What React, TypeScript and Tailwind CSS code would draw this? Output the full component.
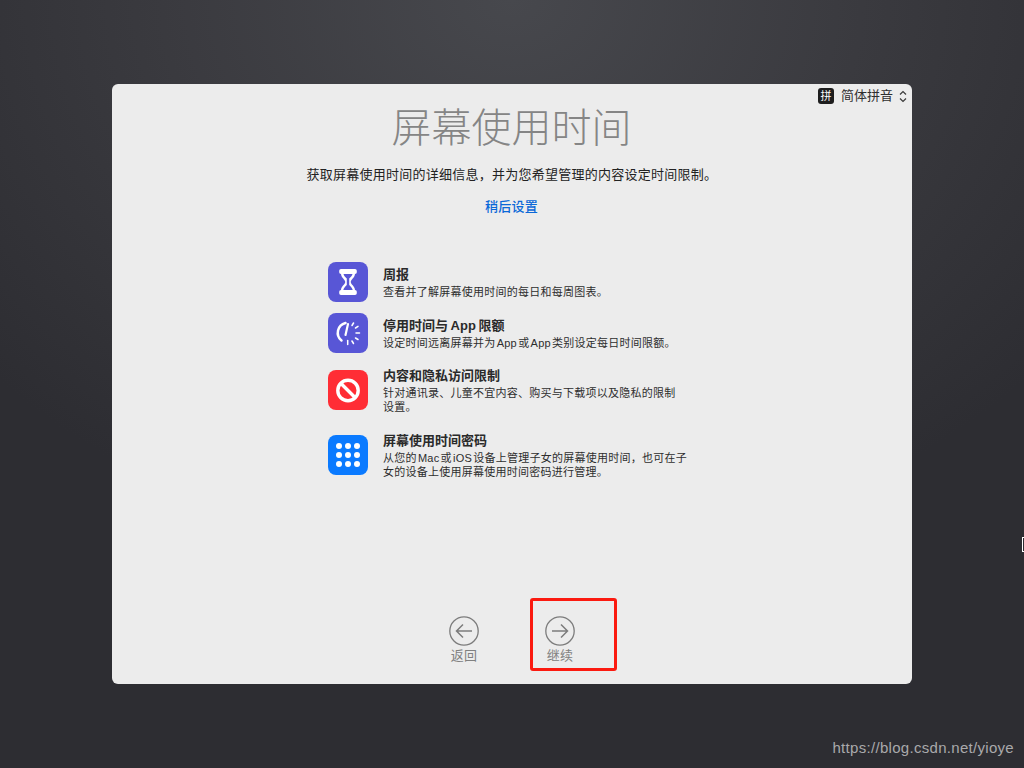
import type { ReactNode } from "react";

function HourglassIcon() {
  return (
    <svg viewBox="0 0 40 40" className="w-10 h-10">
      <rect width="40" height="40" rx="8" fill="#5856d6" />
      <path
        d="M13 7h14a1.800 1.800 0 0 1 1.800 1.800v1.500a1.800 1.800 0 0 1-1.800 1.800c-.3 3.800-3.800 5-4.300 7.900.5 2.900 4 4.100 4.300 7.900a1.800 1.800 0 0 1 1.800 1.800v1.500a1.800 1.800 0 0 1-1.800 1.800H13a1.800 1.800 0 0 1-1.800-1.800v-1.500a1.800 1.800 0 0 1 1.800-1.800c.3-3.800 3.800-5 4.300-7.900-.5-2.900-4-4.100-4.300-7.900a1.800 1.800 0 0 1-1.800-1.800V8.800A1.800 1.800 0 0 1 13 7z"
        fill="#fff"
      />
      <path
        d="M15.500 12h9c-.3 2-2 3-3.300 4.500V23c1.300 1.500 3 2.500 3.500 5H15.300c.5-2.500 2.200-3.500 3.500-5v-6.500c-1.300-1.500-3-2.500-3.300-4.500z"
        fill="#5856d6"
      />
    </svg>
  );
}

function DowntimeIcon() {
  const ticks = [
    "M24 12.500l1.500-2.500",
    "M27.500 15l2.500-1.600",
    "M28 20h3.500",
    "M27.500 25l2.500 1.500",
    "M24 28l1.500 2.500",
    "M19.700 27.500v4",
  ];
  return (
    <svg viewBox="0 0 40 40" className="w-10 h-10">
      <rect width="40" height="40" rx="8" fill="#5856d6" />
      <path
        d="M17.500 10a10 10 0 0 0-4 17.500"
        fill="none"
        stroke="#fff"
        strokeWidth="2.500"
        strokeLinecap="round"
      />
      <path d="M20 11l-2.500 11" stroke="#fff" strokeWidth="2.200" strokeLinecap="round" />
      {ticks.map((d) => (
        <path key={d} d={d} stroke="#fff" strokeWidth="1.500" strokeLinecap="round" />
      ))}
    </svg>
  );
}

function BlockedIcon() {
  return (
    <svg viewBox="0 0 40 40" className="w-10 h-10">
      <rect width="40" height="40" rx="8" fill="#ff2d35" />
      <circle cx="20" cy="20.500" r="10.200" fill="none" stroke="#fff" strokeWidth="3.400" />
      <path d="M13 13.500l14 14" stroke="#fff" strokeWidth="3.400" />
    </svg>
  );
}

function PasscodeIcon() {
  const dots = [11, 20, 29];
  return (
    <svg viewBox="0 0 40 40" className="w-10 h-10">
      <rect width="40" height="40" rx="8" fill="#0a7aff" />
      {dots.map((cy) =>
        dots.map((cx) => <circle key={`${cx}-${cy}`} cx={cx} cy={cy} r="3" fill="#fff" />),
      )}
    </svg>
  );
}

function FeatureRow({
  icon,
  title,
  lines,
  className,
}: {
  icon: ReactNode;
  title: string;
  lines: string[];
  className: string;
}) {
  return (
    <div className={`flex items-center gap-[15px] ${className}`}>
      {icon}
      <div className="w-[310px]">
        <div className="text-[13px] leading-[18px] mb-[1px] font-semibold text-[#2a2a2a]">{title}</div>
        {lines.map((line) => (
          <div key={line} className="text-[11px] leading-[14px] tracking-[0.25px] text-[#2e2e2e] whitespace-nowrap">
            {line}
          </div>
        ))}
      </div>
    </div>
  );
}

function NavButton({ dir, label }: { dir: "back" | "next"; label: string }) {
  return (
    <div className="flex flex-col items-center w-[32px] gap-[1px]">
      <svg viewBox="0 0 30 30" className="w-[30px] h-[30px]" fill="none" stroke="#7c7c7c">
        <circle cx="15" cy="15" r="14.200" strokeWidth="1.300" />
        <path
          d={dir === "back" ? "M23 15H7.500M14 8.500L7.500 15l6.500 6.500" : "M7 15h15.500M16 8.500l6.500 6.500-6.500 6.500"}
          strokeWidth="1.500"
        />
      </svg>
      <span className="pl-[1px] text-[13px] leading-[18px] tracking-[0.3px] text-[#808080]">{label}</span>
    </div>
  );
}

export default function App() {
  return (
    <div
      className="relative h-[768px] w-[1024px] overflow-hidden flex items-center justify-center bg-[radial-gradient(ellipse_700px_560px_at_50%_0%,#47484d_0%,#3a3a3f_50%,#2d2d32_100%)]"
      style={{ fontFamily: '"Liberation Sans", "Noto Sans CJK SC", sans-serif' }}
    >
      <div className="relative w-[800px] h-[600px] rounded-[6px] bg-[#ececec] flex flex-col items-center">
        {/* Input source menu */}
        <div className="absolute top-[4px] right-[5px] flex items-center h-[16px]">
          <span className="w-[16px] h-[16px] rounded-[3px] bg-[#1e1e1e] text-white text-[11px] leading-[16px] text-center">
            拼
          </span>
          <span className="ml-[7px] text-[13px] leading-[16px] text-[#2e2e2e]">简体拼音</span>
          <svg viewBox="0 0 8 13" className="ml-[6px] w-[8px] h-[13px]" fill="none" stroke="#3a3a3a" strokeWidth="1.200">
            <path d="M1 4.500L4 1.500l3 3M1 8.500l3 3 3-3" />
          </svg>
        </div>

        <h1 className="mt-[14px] -ml-[1px] text-[40px] leading-[60px] font-light text-[#858585]">屏幕使用时间</h1>
        <p className="mt-[7px] text-[13px] leading-[20px] tracking-[0.25px] text-[#222]">
          {"获取屏幕使用时间的详细信息\uFF0C并为您希望管理的内容设定时间限制。"}
        </p>
        <a className="mt-[12px] -ml-[1px] text-[13px] leading-[20px] tracking-[0.2px] font-medium text-[#0a68d8]">稍后设置</a>

        <div className="mt-[45px] w-[365px] -ml-[3px] flex flex-col">
          <FeatureRow
            icon={<HourglassIcon />}
            title="周报"
            lines={["查看并了解屏幕使用时间的每日和每周图表。"]}
            className="h-[40px]"
          />
          <FeatureRow
            icon={<DowntimeIcon />}
            title={"停用时间与\u2009App\u2009限额"}
            lines={["设定时间远离屏幕并为\u200AApp\u200A或\u200AApp\u200A类别设定每日时间限额。"]}
            className="h-[40px] mt-[11px]"
          />
          <FeatureRow
            icon={<BlockedIcon />}
            title="内容和隐私访问限制"
            lines={["针对通讯录、儿童不宜内容、购买与下载项以及隐私的限制", "设置。"]}
            className="h-[40px] mt-[17px]"
          />
          <FeatureRow
            icon={<PasscodeIcon />}
            title="屏幕使用时间密码"
            lines={[
              "从您的\u200AMac\u200A或\u200AiOS\u200A设备上管理子女的屏幕使用时间\uFF0C也可在子",
              "女的设备上使用屏幕使用时间密码进行管理。",
            ]}
            className="h-[40px] mt-[25px]"
          />
        </div>

        <div className="mt-auto mb-[19px] flex items-start gap-[64px] ml-[-1px]">
          <NavButton dir="back" label="返回" />
          <NavButton dir="next" label="继续" />
        </div>

        {/* Red annotation box */}
        <div className="absolute left-[418px] top-[514px] w-[87px] h-[73px] rounded-[3px] border-[3px] border-[#fb1a10]" />
      </div>

      {/* Stray text cursor */}
      <div className="absolute left-[1022px] top-[537px] w-[3px] h-[15px] border-l-[1.500px] border-y border-white" />

      <span className="absolute right-[10px] bottom-[11px] text-[15px] leading-[18px] tracking-[0.3px] text-[#a9a9ab]">
        https://blog.csdn.net/yioye
      </span>
    </div>
  );
}
